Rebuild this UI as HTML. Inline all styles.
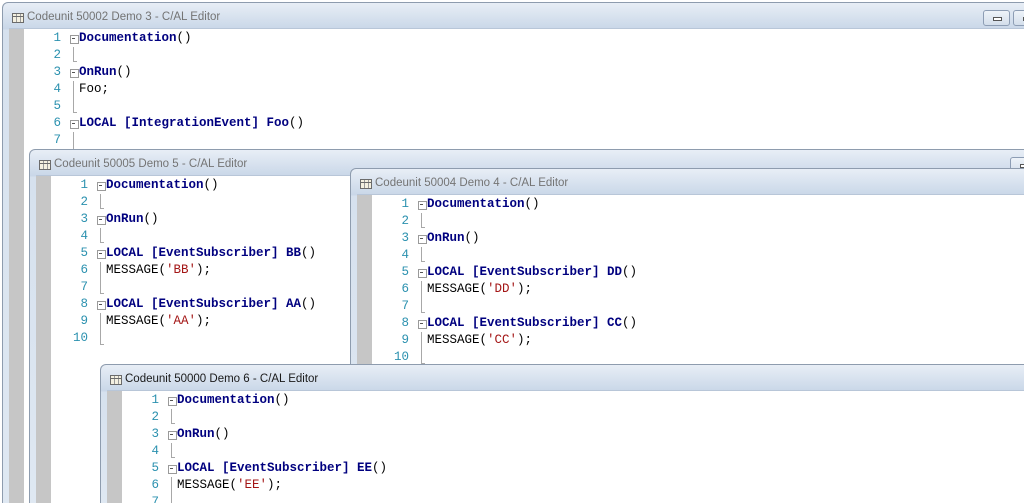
<!DOCTYPE html>
<html style="width:1024px;height:503px;overflow:hidden"><head><meta charset="utf-8"><style>
*{margin:0;padding:0;box-sizing:border-box}
body{width:1024px;height:503px;overflow:hidden;background:#fff;position:relative;font-family:"Liberation Sans",sans-serif}
.win{position:absolute;border:1px solid #8e9cae;border-bottom:none;border-radius:6px 6px 0 0;background:linear-gradient(#e8eef6,#c9d7e8 26px,#d6e1ee 27px,#dfe8f2);overflow:hidden}
.title{position:absolute;left:24px;top:8px;font-size:11.5px;color:#747474;white-space:nowrap}
.win.act .title{color:#1a1a1a}
.ico{position:absolute;left:9px;top:10px;width:12px;height:10px;border:1px solid #6b6b6b;background:
linear-gradient(#6b6b6b,#6b6b6b) 0 2px/100% 1px no-repeat,
repeating-linear-gradient(90deg,#f4f0e0 0 3px,#9a9a9a 3px 4px),#fff}
.body{position:absolute;left:6px;top:25px;right:0;bottom:0;background:#fff;border-top:1px solid #b8c6d8;overflow:hidden}
.gut{position:absolute;left:0;top:0;bottom:0;width:15px;background:#c6c6c6}
.lines{position:absolute;left:15px;top:0}
.ln{height:17px;position:relative;font-family:"Liberation Mono",monospace;font-size:12.5px;line-height:17px;white-space:pre}
.n{position:absolute;left:0;width:37px;text-align:right;color:#2b91af}
.f{position:absolute;left:46px;top:0;width:8px;height:17px}
.f.b::before{content:"";position:absolute;left:0;top:5px;width:7px;height:7px;border:1px solid #9a9a9a;background:#fff}
.f.b::after{content:"";position:absolute;left:2px;top:8px;width:3px;height:1px;background:#555}
.f.m::before{content:"";position:absolute;left:3px;top:0;width:1px;height:17px;background:#a8a8a8}
.f.e::before{content:"";position:absolute;left:3px;top:0;width:1px;height:15px;background:#a8a8a8}
.f.e::after{content:"";position:absolute;left:3px;top:14px;width:4px;height:1px;background:#a8a8a8}
.c{position:absolute;left:55px;top:0;color:#000}
.k{color:#00007f;font-weight:bold}
.s{color:#a31515}
.btn{position:absolute;width:27px;height:16px;border:1px solid #8d9db4;border-radius:3px;background:linear-gradient(#eef3f9,#d3deeb)}
.btn i{position:absolute;left:9px;top:6px;width:9px;height:4px;border:1px solid #555;background:#fff}
</style></head><body>

<div class="win" style="left:2px;top:2px;width:1040px;height:501px">
<div class="ico"></div><div class="title">Codeunit 50002 Demo 3 - C/AL Editor</div>
<div class="btn" style="left:980px;top:7px"><i></i></div>
<div class="btn" style="left:1010px;top:7px"><i></i></div>
<div class="body"><div class="gut"></div><div class="lines" style="top:1px">
<div class="ln"><span class="n">1</span><span class="f b"></span><span class="c"><span class="k">Documentation</span>()</span></div>
<div class="ln"><span class="n">2</span><span class="f e"></span></div>
<div class="ln"><span class="n">3</span><span class="f b"></span><span class="c"><span class="k">OnRun</span>()</span></div>
<div class="ln"><span class="n">4</span><span class="f m"></span><span class="c">Foo;</span></div>
<div class="ln"><span class="n">5</span><span class="f e"></span></div>
<div class="ln"><span class="n">6</span><span class="f b"></span><span class="c"><span class="k">LOCAL [IntegrationEvent] Foo</span>()</span></div>
<div class="ln"><span class="n">7</span><span class="f m"></span></div>
</div></div></div>

<div class="win" style="left:29px;top:149px;width:1020px;height:354px">
<div class="ico"></div><div class="title">Codeunit 50005 Demo 5 - C/AL Editor</div>
<div class="btn" style="left:980px;top:7px"><i></i></div>
<div class="body"><div class="gut"></div><div class="lines" style="top:1px">
<div class="ln"><span class="n">1</span><span class="f b"></span><span class="c"><span class="k">Documentation</span>()</span></div>
<div class="ln"><span class="n">2</span><span class="f e"></span></div>
<div class="ln"><span class="n">3</span><span class="f b"></span><span class="c"><span class="k">OnRun</span>()</span></div>
<div class="ln"><span class="n">4</span><span class="f e"></span></div>
<div class="ln"><span class="n">5</span><span class="f b"></span><span class="c"><span class="k">LOCAL [EventSubscriber] BB</span>()</span></div>
<div class="ln"><span class="n">6</span><span class="f m"></span><span class="c">MESSAGE(<span class="s">'BB'</span>);</span></div>
<div class="ln"><span class="n">7</span><span class="f e"></span></div>
<div class="ln"><span class="n">8</span><span class="f b"></span><span class="c"><span class="k">LOCAL [EventSubscriber] AA</span>()</span></div>
<div class="ln"><span class="n">9</span><span class="f m"></span><span class="c">MESSAGE(<span class="s">'AA'</span>);</span></div>
<div class="ln"><span class="n">10</span><span class="f e"></span></div>
</div></div></div>

<div class="win" style="left:350px;top:168px;width:700px;height:335px">
<div class="ico"></div><div class="title">Codeunit 50004 Demo 4 - C/AL Editor</div>
<div class="body"><div class="gut"></div><div class="lines" style="top:1px">
<div class="ln"><span class="n">1</span><span class="f b"></span><span class="c"><span class="k">Documentation</span>()</span></div>
<div class="ln"><span class="n">2</span><span class="f e"></span></div>
<div class="ln"><span class="n">3</span><span class="f b"></span><span class="c"><span class="k">OnRun</span>()</span></div>
<div class="ln"><span class="n">4</span><span class="f e"></span></div>
<div class="ln"><span class="n">5</span><span class="f b"></span><span class="c"><span class="k">LOCAL [EventSubscriber] DD</span>()</span></div>
<div class="ln"><span class="n">6</span><span class="f m"></span><span class="c">MESSAGE(<span class="s">'DD'</span>);</span></div>
<div class="ln"><span class="n">7</span><span class="f e"></span></div>
<div class="ln"><span class="n">8</span><span class="f b"></span><span class="c"><span class="k">LOCAL [EventSubscriber] CC</span>()</span></div>
<div class="ln"><span class="n">9</span><span class="f m"></span><span class="c">MESSAGE(<span class="s">'CC'</span>);</span></div>
<div class="ln"><span class="n">10</span><span class="f e"></span></div>
</div></div></div>

<div class="win act" style="left:100px;top:364px;width:960px;height:139px">
<div class="ico"></div><div class="title">Codeunit 50000 Demo 6 - C/AL Editor</div>
<div class="body"><div class="gut"></div><div class="lines" style="top:1px">
<div class="ln"><span class="n">1</span><span class="f b"></span><span class="c"><span class="k">Documentation</span>()</span></div>
<div class="ln"><span class="n">2</span><span class="f e"></span></div>
<div class="ln"><span class="n">3</span><span class="f b"></span><span class="c"><span class="k">OnRun</span>()</span></div>
<div class="ln"><span class="n">4</span><span class="f e"></span></div>
<div class="ln"><span class="n">5</span><span class="f b"></span><span class="c"><span class="k">LOCAL [EventSubscriber] EE</span>()</span></div>
<div class="ln"><span class="n">6</span><span class="f m"></span><span class="c">MESSAGE(<span class="s">'EE'</span>);</span></div>
<div class="ln"><span class="n">7</span><span class="f m"></span></div>
</div></div></div>

</body></html>
